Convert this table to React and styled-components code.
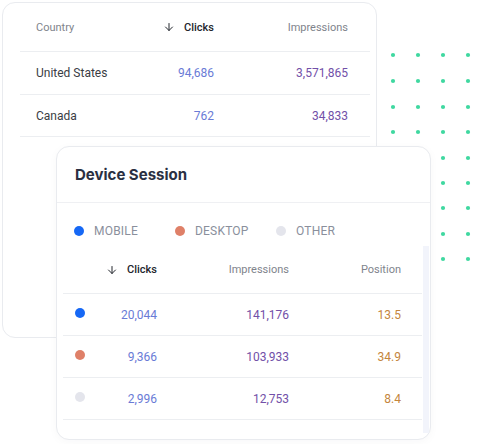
import styled, { createGlobalStyle } from 'styled-components';
import { ArrowDown } from 'lucide-react';

const GlobalStyle = createGlobalStyle`
  body {
    margin: 0;
    background: #ffffff;
    font-family: Roboto, "Liberation Sans", sans-serif;
  }
`;

const Stage = styled.div`
  position: relative;
  width: 477px;
  height: 444px;
  overflow: hidden;
  padding: 2px;
  box-sizing: border-box;
`;

const Dots = styled.svg`
  position: absolute;
  left: 388px;
  top: 50px;
`;

const Card = styled.div`
  position: relative;
  box-sizing: border-box;
  width: 375px;
  height: ${p => p.$height}px;
  background: #fff;
  border: 1px solid #e9ebef;
  border-radius: 13px;
`;

const FrontCard = styled(Card)`
  position: absolute;
  left: 56px;
  top: 146px;
  display: flex;
  flex-direction: column;
  box-shadow: 0 2px 10px rgba(30, 40, 60, 0.03);
`;

const BackTable = styled.div`
  margin-left: 17px;
  width: 350px;
`;

const Row = styled.div`
  display: grid;
  grid-template-columns: ${p => p.$cols};
  align-items: center;
  height: ${p => p.$h}px;
  padding: ${p => p.$pad};
  border-bottom: 1px solid #eceef1;
  font-size: 12px;
`;

const HeadCell = styled.div`
  font-size: 11px;
  font-weight: ${p => (p.$active ? 500 : 400)};
  color: ${p => (p.$active ? '#23262d' : '#80848c')};
  text-align: ${p => (p.$left ? 'left' : 'right')};
  display: flex;
  align-items: center;
  justify-content: ${p => (p.$left ? 'flex-start' : 'flex-end')};
  gap: 9px;
`;

const Cell = styled.div`
  color: ${p => p.$color || '#3a3d44'};
  text-align: ${p => (p.$left ? 'left' : 'right')};
`;

const Title = styled.div`
  flex: none;
  height: 55px;
  display: flex;
  align-items: center;
  padding-left: 18px;
  font-family: Inter, Roboto, sans-serif;
  font-size: 15px;
  font-weight: 700;
  color: #2a3042;
  border-bottom: 1px solid #eff0f3;
`;

const Legend = styled.div`
  flex: none;
  box-sizing: border-box;
  display: flex;
  align-items: center;
  height: 43px;
  padding: 12px 0 0 17px;
`;

const LegendItem = styled.div`
  display: flex;
  align-items: center;
  gap: 10px;
  width: ${p => p.$w}px;
  font-size: 12px;
  color: #8a8f9c;
  letter-spacing: 0.2px;
`;

const Dot = styled.span`
  display: inline-block;
  width: 10px;
  height: 10px;
  border-radius: 50%;
  background: ${p => p.$color};
  margin-top: ${p => p.$lift || 0}px;
`;

const Body = styled.div`
  display: flex;
  padding-left: 6px;
  flex: 1;
`;

const FrontTable = styled.div`
  width: 359px;
`;

const Track = styled.div`
  width: 6px;
  height: 187px;
  margin-left: 1px;
  background: #f2f4fb;
`;

const green = '#3fd8a0';

const dotRows = [0, 26, 52, 77, 103, 128, 153, 179, 204];
const dotCols = [0, 25, 50, 75];

const backCols = '1fr 74px 134px';
const frontCols = '10px 72px 132px 112px';

const devices = [
  { color: '#1668f5', clicks: '20,044', impr: '141,176', pos: '13.5' },
  { color: '#df8068', clicks: '9,366', impr: '103,933', pos: '34.9' },
  { color: '#e4e5ec', clicks: '2,996', impr: '12,753', pos: '8.4' },
];

export default function App() {
  return (
    <>
      <GlobalStyle />
      <Stage>
        <Dots width="90" height="215" viewBox="0 0 90 215">
          {dotRows.map(y =>
            dotCols.map(x => (
              <circle key={`${x}-${y}`} cx={x + 5} cy={y + 5} r="2.1" fill={green} />
            ))
          )}
        </Dots>

        <Card $height={336}>
          <BackTable>
            <Row $cols={backCols} $h={48} $pad="0 22px 0 16px">
              <HeadCell $left>Country</HeadCell>
              <HeadCell $active>
                <ArrowDown size={12} strokeWidth={2} color="#23262d" />
                Clicks
              </HeadCell>
              <HeadCell>Impressions</HeadCell>
            </Row>
            <Row $cols={backCols} $h={42} $pad="0 22px 0 16px">
              <Cell $left>United States</Cell>
              <Cell $color="#6a7bd6">94,686</Cell>
              <Cell $color="#7250a8">3,571,865</Cell>
            </Row>
            <Row $cols={backCols} $h={41} $pad="0 22px 0 16px">
              <Cell $left>Canada</Cell>
              <Cell $color="#6a7bd6">762</Cell>
              <Cell $color="#7250a8">34,833</Cell>
            </Row>
          </BackTable>
        </Card>

        <FrontCard $height={294}>
          <Title>Device Session</Title>
          <Legend>
            <LegendItem $w={101}>
              <Dot $color="#1668f5" />
              MOBILE
            </LegendItem>
            <LegendItem $w={101}>
              <Dot $color="#df8068" />
              DESKTOP
            </LegendItem>
            <LegendItem $w={80}>
              <Dot $color="#e4e5ec" />
              OTHER
            </LegendItem>
          </Legend>
          <Body>
            <FrontTable>
              <Row $cols={frontCols} $h={47} $pad="0 21px 0 12px">
                <span />
                <HeadCell $active>
                  <ArrowDown size={12} strokeWidth={2} color="#23262d" />
                  Clicks
                </HeadCell>
                <HeadCell>Impressions</HeadCell>
                <HeadCell>Position</HeadCell>
              </Row>
              {devices.map(d => (
                <Row key={d.clicks} $cols={frontCols} $h={41} $pad="0 21px 0 12px">
                  <Dot $color={d.color} $lift={-4} />
                  <Cell $color="#6a7bd6">{d.clicks}</Cell>
                  <Cell $color="#7250a8">{d.impr}</Cell>
                  <Cell $color="#c4853c">{d.pos}</Cell>
                </Row>
              ))}
            </FrontTable>
            <Track />
          </Body>
        </FrontCard>
      </Stage>
    </>
  );
}
